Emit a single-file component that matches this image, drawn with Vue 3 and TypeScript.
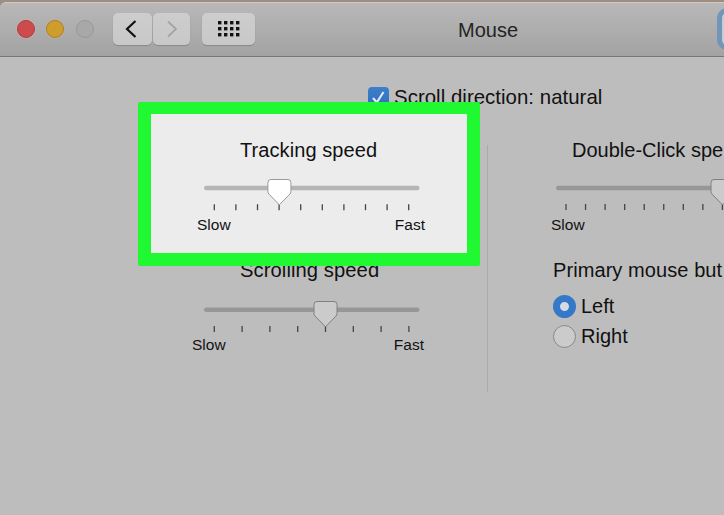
<script setup lang="ts">
import { ref } from 'vue'

interface Slider {
  first: number
  step: number
  count: number
  thumb: number
}

const tracking: Slider = { first: 10.3, step: 21.6, count: 10, thumb: 75.4 }
const scrolling: Slider = { first: 10.3, step: 27.8, count: 8, thumb: 121.5 }
const doubleClick: Slider = { first: 10, step: 19.55, count: 9, thumb: 166.5 }

const ticks = (s: Slider): number[] =>
  Array.from({ length: s.count }, (_, i) => s.first + i * s.step)

const natural = ref(true)
const primary = ref('Left')
const dots = Array.from({ length: 12 }, (_, i) => ({ x: (i % 4) * 6, y: Math.floor(i / 4) * 6 }))
</script>

<template>
  <div class="window">
    <header class="toolbar">
      <div class="lights">
        <i class="light close"></i>
        <i class="light minimize"></i>
        <i class="light zoom"></i>
      </div>
      <div class="nav">
        <button class="tool back" aria-label="Back">
          <svg width="12" height="18" viewBox="0 0 12 18"><path d="M10.500 1 2 9l8.500 8" /></svg>
        </button>
        <button class="tool forward" aria-label="Forward">
          <svg width="12" height="18" viewBox="0 0 12 18"><path d="m2 1.500 8 7.500-8 7.500" /></svg>
        </button>
      </div>
      <button class="tool all" aria-label="Show all">
        <svg width="22" height="16" viewBox="0 0 22 16">
          <rect v-for="(d, i) in dots" :key="i" :x="d.x" :y="d.y" width="3.400" height="3.400" />
        </svg>
      </button>
      <h1>Mouse</h1>
      <div class="search"></div>
    </header>

    <main>
      <label class="natural" @click="natural = !natural">
        <span class="checkbox">
          <svg v-if="natural" width="21" height="21" viewBox="0 0 21 21"><path d="m5 11 3.800 4.500L15.500 5" /></svg>
        </span>
        Scroll direction: natural
      </label>

      <div class="columns">
        <div class="left">
          <section class="callout">
            <h2>Tracking speed</h2>
            <svg class="slider" width="216" height="36" viewBox="0 0 216 36">
              <rect class="track bright" x="0" y="7.700" width="215.500" height="4.600" rx="2.300" />
              <path v-for="x in ticks(tracking)" :key="x" class="tick" :d="`M${x} 26.200v6`" />
              <path class="thumb white" :transform="`translate(${tracking.thumb} 0)`" d="M-8.500 1.500h17q3 0 3 3v9q0 1.500-1 2.600L0 26.800-10.500 16.100q-1-1.100-1-2.600v-9q0-3 3-3z" />
            </svg>
            <div class="ends"><span>Slow</span><span>Fast</span></div>
          </section>
          <section class="scrolling">
            <h2>Scrolling speed</h2>
            <svg class="slider" width="216" height="36" viewBox="0 0 216 36">
              <rect class="track" x="0" y="7.500" width="215.500" height="4.600" rx="2.300" />
              <path v-for="x in ticks(scrolling)" :key="x" class="tick" :d="`M${x} 26v6`" />
              <path class="thumb" :transform="`translate(${scrolling.thumb} 0)`" d="M-8.500 1.500h17q3 0 3 3v9q0 1.500-1 2.600L0 26.800-10.500 16.100q-1-1.100-1-2.600v-9q0-3 3-3z" />
            </svg>
            <div class="ends"><span>Slow</span><span>Fast</span></div>
          </section>
        </div>

        <div class="divider"></div>

        <div class="right">
          <section class="double">
            <h2>Double-Click spe</h2>
            <svg class="slider" width="216" height="36" viewBox="0 0 216 36">
              <rect class="track" x="0" y="7.700" width="215.500" height="4.600" rx="2.300" />
              <path v-for="x in ticks(doubleClick)" :key="x" class="tick" :d="`M${x} 26v6`" />
              <path class="thumb" :transform="`translate(${doubleClick.thumb} 0)`" d="M-8.500 1.500h17q3 0 3 3v9q0 1.500-1 2.600L0 26.800-10.500 16.100q-1-1.100-1-2.600v-9q0-3 3-3z" />
            </svg>
            <div class="ends"><span>Slow</span></div>
          </section>
          <section class="primary">
            <h2>Primary mouse but</h2>
            <label v-for="side in ['Left', 'Right']" :key="side" @click="primary = side">
              <i class="radio" :class="{ on: primary === side }"></i>{{ side }}
            </label>
          </section>
        </div>
      </div>
    </main>
  </div>
</template>

<style>
body {
  margin: 0;
  background: #bdbdbd;
  overflow: hidden;
}
</style>

<style scoped>
.window {
  box-sizing: border-box;
  width: 724px;
  height: 515px;
  overflow: hidden;
  background: linear-gradient(#9c8f83, #9c8580) 0 0 / 100% 10px no-repeat, #bdbdbd;
  padding-top: 2px;
  font-family: "Liberation Sans", Arial, sans-serif;
  font-size: 20px;
  color: #111;
}
.toolbar {
  box-sizing: border-box;
  display: flex;
  align-items: center;
  height: 55px;
  padding: 0 0 1px 17px;
  border-top: 1px solid #d3cac6;
  border-bottom: 1px solid #777;
  border-radius: 6px 0 0 0;
  background: linear-gradient(#b8b8b8, #a3a3a3);
}
.toolbar > * {
  flex: none;
}
.lights {
  display: flex;
  gap: 11.400px;
  width: 96px;
}
.light {
  box-sizing: border-box;
  width: 18px;
  height: 18px;
  border-radius: 50%;
  border: 1px solid;
}
.close { background: #cd4b4d; border-color: #a93f41; box-shadow: 0 0 0 1px #c5aaa8; }
.minimize { background: #cf9d2b; border-color: #a98130; box-shadow: 0 0 0 1px #b9afa0; }
.zoom { background: #a8a8a8; border-color: #999; }
.nav {
  display: flex;
  gap: 1px;
  margin-right: 12px;
}
.tool {
  box-sizing: border-box;
  display: flex;
  align-items: center;
  justify-content: center;
  height: 32px;
  padding: 0;
  border: 0;
  border-radius: 5px;
  background: linear-gradient(#cdcdcd, #c8c8c8);
  box-shadow: 0 1px 1px #888;
}
.tool path {
  fill: none;
  stroke: #111;
  stroke-width: 2.200;
}
.back { width: 39px; padding-right: 3px; }
.forward { width: 37px; }
.forward path { stroke: #a5a5a5; stroke-width: 1.800; }
.all { width: 53px; }
.all rect { fill: #111; }
h1,
h2 {
  margin: 0;
  font-size: 20px;
  line-height: 24px;
  font-weight: 400;
  white-space: nowrap;
}
h1 {
  width: 60px;
  margin: 1px 199px 0 203px;
  color: #242424;
}
h2 {
  letter-spacing: 0.080px;
}
.search {
  box-sizing: border-box;
  width: 200px;
  height: 42px;
  border: 5px solid #7295b8;
  border-radius: 10px;
  background: #c7ccd2;
}
main {
  padding-top: 26px;
}
.natural {
  display: flex;
  align-items: center;
  gap: 5px;
  height: 28px;
  margin-left: 368px;
  font-size: 20.400px;
  letter-spacing: 0.040px;
  white-space: nowrap;
}
.checkbox {
  width: 21px;
  height: 21px;
  border-radius: 4px;
  background: linear-gradient(#3e7fc8, #2c6fc2);
}
.checkbox svg { display: block; }
.checkbox path {
  fill: none;
  stroke: #e2e9f2;
  stroke-width: 2.200;
}
.columns {
  display: flex;
  align-items: flex-start;
  margin-top: -9px;
  padding-left: 138px;
}
.left {
  flex: none;
  width: 342px;
}
.callout {
  box-sizing: border-box;
  position: relative;
  z-index: 1;
  height: 164px;
  padding: 24px 42px 0 46px;
  border: 13px solid #20f931;
  border-top-width: 12px;
  border-radius: 2px;
  background: #ececec;
}
.callout h2 { margin-left: 43px; }
.slider {
  display: block;
  margin: 16px 0 2px 7px;
  overflow: visible;
}
.track { fill: #979797; }
.bright { fill: #b5b5b5; }
.tick {
  fill: none;
  stroke: #444;
  stroke-width: 1.300;
}
.thumb {
  fill: #cbcbcb;
  stroke: #808080;
  stroke-width: 1;
}
.white { fill: #fff; stroke: #999; }
.ends {
  display: flex;
  justify-content: space-between;
  font-size: 15.500px;
  line-height: 18px;
}
.scrolling {
  width: 232px;
  margin: -8px 0 0 54px;
}
.scrolling h2 { margin-left: 48px; font-size: 20.200px; }
.scrolling .slider { margin: 18px 0 0 12px; }
.divider {
  flex: none;
  width: 1px;
  height: 247px;
  margin: 43px 65px 0 7px;
  background: #aaa;
}
.right {
  flex: none;
  width: 171px;
}
.double {
  padding-top: 36px;
}
.double h2 { margin-left: 19px; letter-spacing: 0; }
.double .slider { margin-left: 3px; }
.double .ends { margin-left: -2px; }
.primary {
  margin-top: 24px;
}
.primary h2 { margin-bottom: 10px; }
.primary label {
  display: flex;
  align-items: center;
  gap: 5px;
  height: 29.500px;
}
.radio {
  box-sizing: border-box;
  width: 23px;
  height: 23px;
  border: 1px solid #888;
  border-radius: 50%;
  background: #cbcbcb;
}
.radio.on {
  border: 7.500px solid #3578c8;
  background: #d5dbe3;
}
</style>
